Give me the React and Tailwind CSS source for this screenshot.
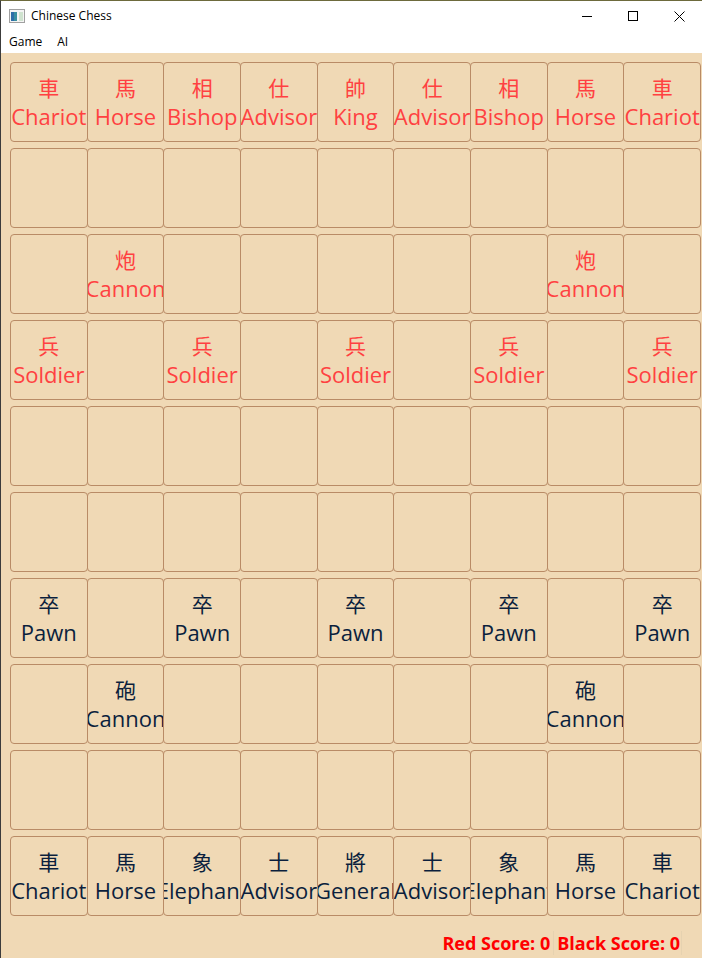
import React from "react";

const R = "r", B = "b";
const board = Array.from({ length: 10 }, () => Array(9).fill(null));
const back = (side, names) => names.map(([c, e]) => ({ side, c, e }));
board[0] = back(R, [["車","Chariot"],["馬","Horse"],["相","Bishop"],["仕","Advisor"],["帥","King"],["仕","Advisor"],["相","Bishop"],["馬","Horse"],["車","Chariot"]]);
board[2][1] = board[2][7] = { side: R, c: "炮", e: "Cannon" };
[0,2,4,6,8].forEach(i => { board[3][i] = { side: R, c: "兵", e: "Soldier" }; board[6][i] = { side: B, c: "卒", e: "Pawn" }; });
board[7][1] = board[7][7] = { side: B, c: "砲", e: "Cannon" };
board[9] = back(B, [["車","Chariot"],["馬","Horse"],["象","Elephant"],["士","Advisor"],["將","General"],["士","Advisor"],["象","Elephant"],["馬","Horse"],["車","Chariot"]]);

function Cell({ p }) {
  return (
    <div className="h-[80px] w-[calc(100%+1px)] rounded-[4px] border border-[#b98b66] bg-[#f0d9b5] overflow-hidden flex flex-col items-center justify-center">
      {p && (
        <div className={"flex flex-col items-center pb-[1px] " + (p.side === R ? "text-[#ff4141]" : "text-[#0b1f3d]")}>
          <span className="text-[21px] leading-[28px] whitespace-nowrap [font-family:'Noto_Sans_CJK_TC','Noto_Sans_CJK_SC',sans-serif]">{p.c}</span>
          <span className="text-[22px] leading-[30px] whitespace-nowrap [font-family:'Open_Sans','Noto_Sans',sans-serif]">{p.e}</span>
        </div>
      )}
    </div>
  );
}

export default function App() {
  return (
    <div className="w-[702px] h-[958px] bg-[#f0d9b5] flex flex-col border-l border-l-[#3c3c3c] border-t border-t-[#6d6a3c] [font-family:'Open_Sans','Noto_Sans',sans-serif] overflow-hidden">
      <div className="h-[30px] bg-white flex items-center shrink-0">
        <svg width="16" height="14" viewBox="0 0 16 14" className="ml-[8px]">
          <rect x="0.5" y="0.5" width="15" height="13" fill="#f4f4f4" stroke="#a0a0a0" />
          <rect x="2" y="3" width="6" height="9" fill="#3a8fa0" />
          <rect x="2" y="3" width="3" height="9" fill="#2e6ea8" />
          <rect x="10" y="3" width="4" height="9" fill="#cfe3cf" />
        </svg>
        <span className="ml-[6px] text-[12px] text-black">Chinese Chess</span>
        <div className="ml-auto flex items-center h-full">
          <div className="w-[46px] h-full flex items-center justify-center">
            <div className="w-[10px] h-px bg-black" />
          </div>
          <div className="w-[46px] h-full flex items-center justify-center">
            <div className="w-[10px] h-[10px] border border-black" />
          </div>
          <div className="w-[46px] h-full flex items-center justify-center">
            <svg width="11" height="11" viewBox="0 0 11 11"><path d="M0.5 0.5L10.5 10.5M10.5 0.5L0.5 10.5" stroke="#000" strokeWidth="1" /></svg>
          </div>
        </div>
      </div>
      <div className="h-[22px] bg-white flex items-center text-[12px] text-black shrink-0">
        <span className="ml-[8px]">Game</span>
        <span className="ml-[15px]">AI</span>
      </div>
      <div className="pt-[9px] pl-[9px] pr-[2px] grid grid-cols-9 gap-y-[6px]">
        {board.flatMap((row, r) => row.map((p, c) => <Cell key={r + "-" + c} p={p} />))}
      </div>
      <div className="flex-1 flex items-end justify-end pb-[3px] pr-[20px]">
        <div className="flex text-[18px] font-bold text-[#ff0000] leading-[24px]">
          <span className="pr-[3px] border-r border-r-[#e6d2b0]">Red Score: 0</span>
          <span className="pl-[3px] pr-[1px] border-r border-r-[#e6d2b0]">Black Score: 0</span>
        </div>
      </div>
    </div>
  );
}
